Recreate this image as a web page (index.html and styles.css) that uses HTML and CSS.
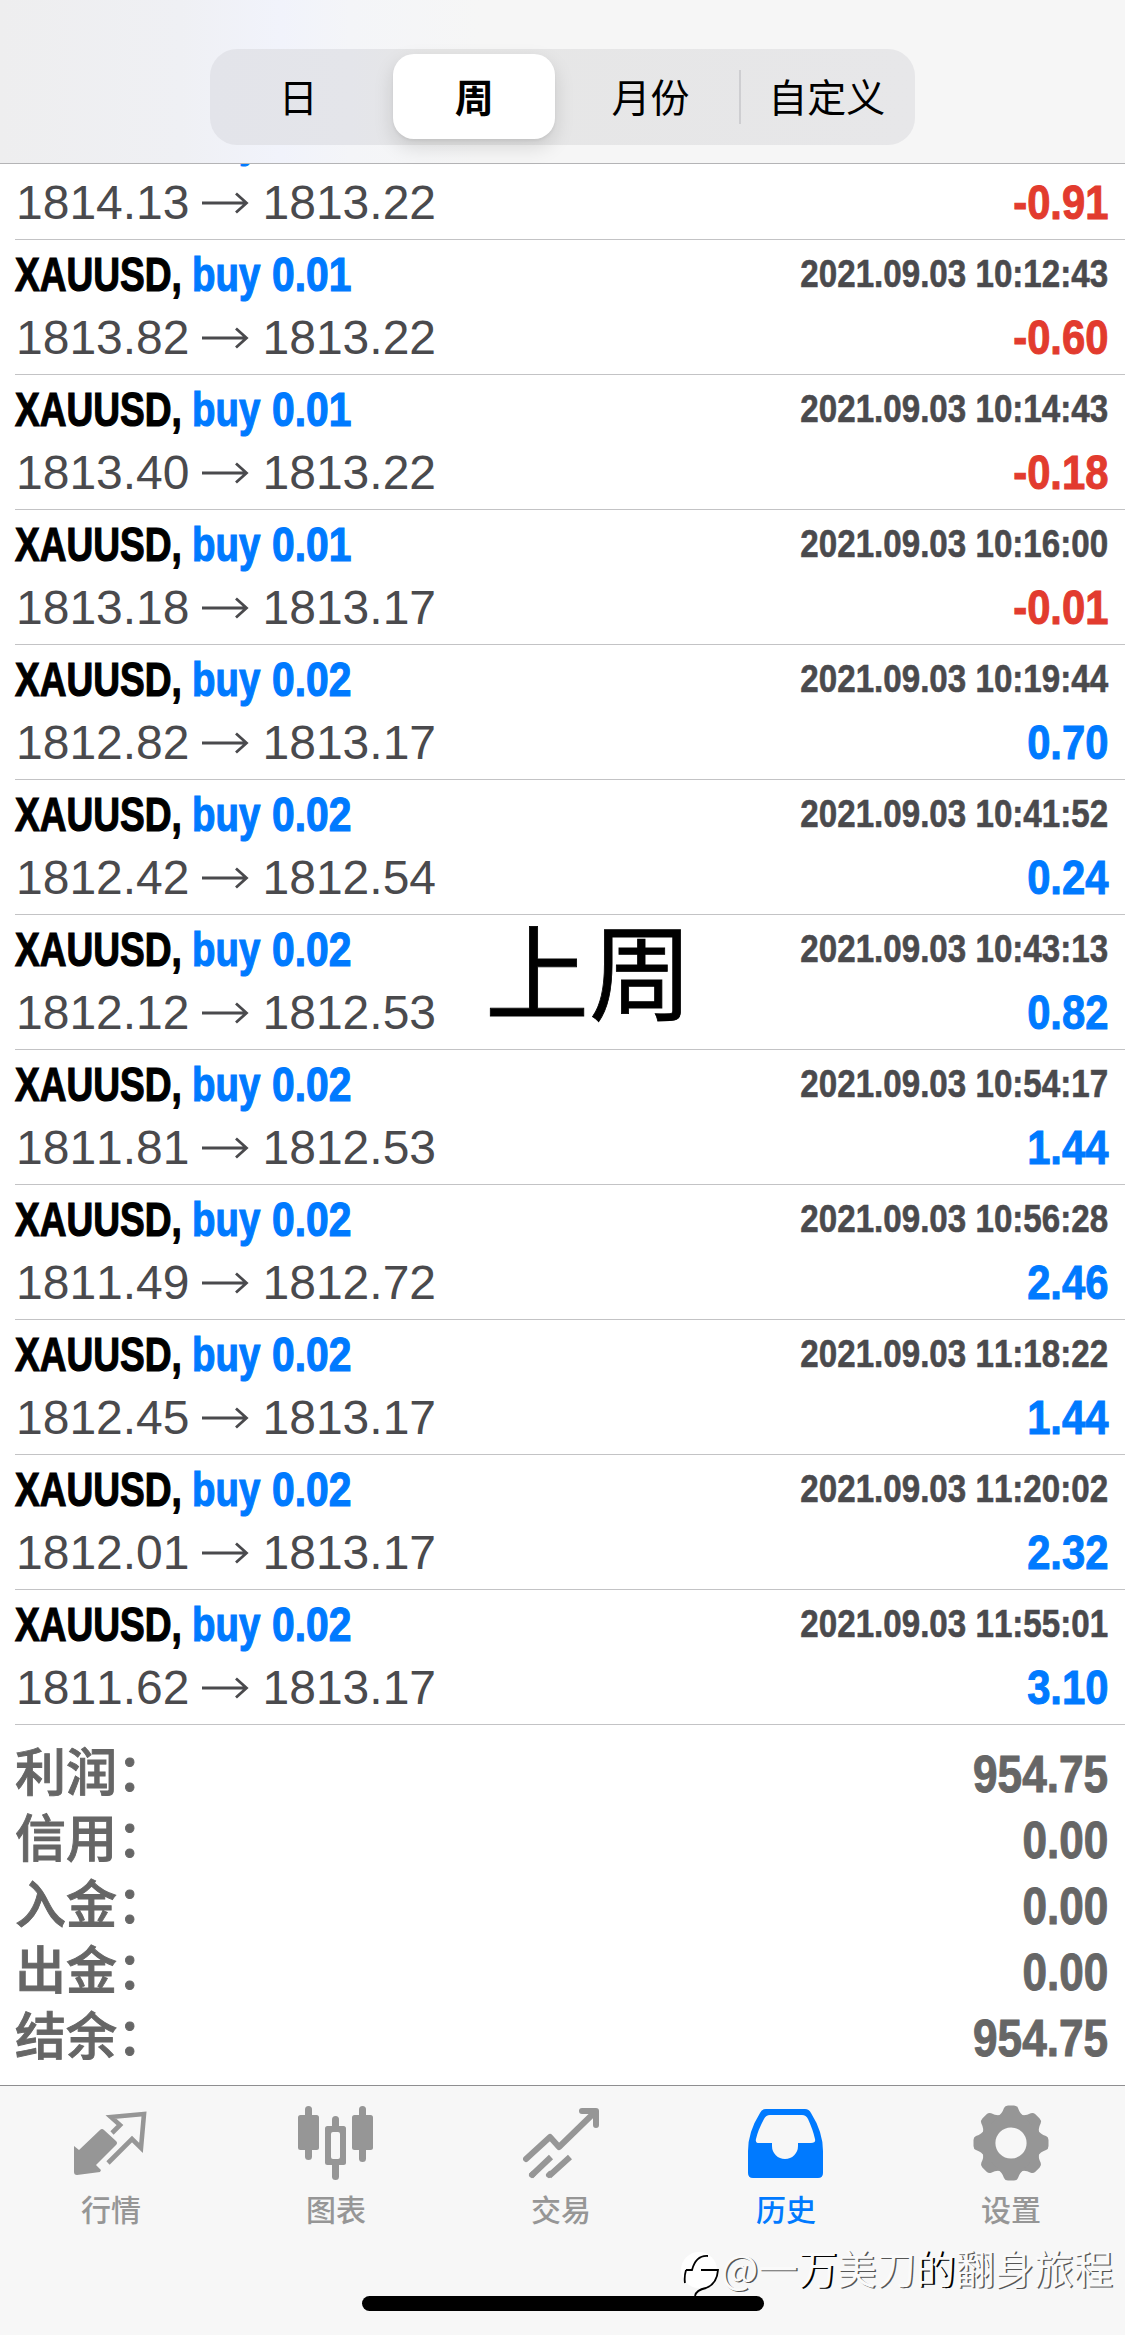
FILE: index.html
```html
<!DOCTYPE html>
<html lang="zh-CN">
<head>
<meta charset="utf-8">
<title>历史</title>
<link rel="stylesheet" href="styles.css">
</head>
<body>
<div class="app">
  <header class="header">
    <nav class="segments">
      <span class="segment">日</span>
      <span class="segment segment-active">周</span>
      <span class="segment">月份</span>
      <span class="segment segment-divided">自定义</span>
    </nav>
  </header>
  <main class="content">
    <div class="deals" id="deals"></div>
    <section class="summary">
      <div class="sum-row"><span class="sum-label">利润：</span><b class="sum-value">954.75</b></div>
      <div class="sum-row"><span class="sum-label">信用：</span><b class="sum-value">0.00</b></div>
      <div class="sum-row"><span class="sum-label">入金：</span><b class="sum-value">0.00</b></div>
      <div class="sum-row"><span class="sum-label">出金：</span><b class="sum-value">0.00</b></div>
      <div class="sum-row"><span class="sum-label">结余：</span><b class="sum-value">954.75</b></div>
    </section>
  </main>
  <footer class="footer">
    <nav class="tabs">
      <div class="tab">
        <svg class="icon" viewBox="0 0 76 76"><path d="M1 41l5 4 21-20q2-2 4 0l12 11q2 2 0 4L23 60l5 5-1 2-23 3q-3 0-3-3z" fill="#969696"/><path d="M39 28l8-8-9-8 33-3-3 34-9-9-24 24" fill="none" stroke="#969696" stroke-width="4.6"/></svg>
        <span>行情</span>
      </div>
      <div class="tab">
        <svg class="icon" viewBox="0 0 76 76" fill="#969696"><rect x="7" y="1" width="7" height="54" rx="3.5"/><rect y="10" width="21" height="35" rx="2.5"/><rect x="61" y="1" width="7" height="56" rx="3.5"/><rect x="54" y="10" width="21" height="35" rx="2.5"/><rect x="34" y="11" width="7" height="20" rx="3.5"/><rect x="34" y="50" width="7" height="25" rx="3.5"/><rect x="27" y="21" width="21" height="39" rx="2.5"/><rect x="33" y="27" width="9" height="27" rx="2" fill="#f7f7f7"/></svg>
        <span>图表</span>
      </div>
      <div class="tab">
        <svg class="icon" viewBox="0 0 76 76" fill="none" stroke="#969696" stroke-width="6" stroke-linejoin="round" stroke-linecap="round"><path d="M3 54l24-22 9 10L72 7M59 6h14v14"/><path stroke-linecap="butt" d="M8 71l20-19M26 71l21-19"/><path d="M9 70l1-1M26 70l1-1"/></svg>
        <span>交易</span>
      </div>
      <div class="tab tab-active">
        <svg class="icon" viewBox="0 0 76 76"><path fill="#007aff" fill-rule="evenodd" d="M18 4h39q4 0 6 4 12 19 12 38v22q0 5-5 5H5q-5 0-5-5V46Q0 27 12 8q2-4 6-4zM22 10q-4 0-6 4-6 11-8 20-1 4 3 4h13v3a13 13 0 0 0 26 0v-3h13q5 0 4-4-2-9-7-20-2-4-6-4z"/></svg>
        <span>历史</span>
      </div>
      <div class="tab">
        <svg class="icon" viewBox="-38 -38 76 76"><g fill="#969696"><circle r="29.5"/><g id="teeth"><path id="tooth" d="M-13-27Q-9-29-7-35-6-37.500-3-37.500H3Q6-37.500 7-35 9-29 13-27z"/><use href="#tooth" transform="rotate(45)"/><use href="#tooth" transform="rotate(90)"/><use href="#tooth" transform="rotate(135)"/></g><use href="#teeth" transform="rotate(180)"/></g><circle r="15.600" fill="#f7f7f7"/></svg>
        <span>设置</span>
      </div>
    </nav>
    <div class="home-indicator"></div>
  </footer>
  <div class="caption">上周</div>
  <div class="watermark">
    <svg class="wm-logo" viewBox="0 0 38 46"><circle cx="18" cy="20" r="18" fill="#fff"/><path d="M5 20h6Q15 5 27 6M5 20Q3 27 4 33M20 20h17Q36 34 25 38 15 40 14 46" fill="none" stroke="#000" stroke-width="1.800"/></svg>
    <span>@一<b class="wm-strong">万</b>美刀<b class="wm-strong">的</b>翻身旅程</span>
  </div>
</div>
<script src="deals.js"></script>
</body>
</html>
```
FILE: styles.css
```css
* { box-sizing: border-box; }
body { margin: 0; background: #fff; }
.app {
  position: relative;
  width: 1125px;
  height: 2335px;
  overflow: hidden;
  display: flex;
  flex-direction: column;
  font-family: "Liberation Sans", "Noto Sans CJK SC", sans-serif;
  font-kerning: none;
}
.header {
  height: 164px;
  flex: none;
  padding: 49px 210px 0;
  border-bottom: 1px solid #b4b4b6;
  background: linear-gradient(90deg, #eeeeef 0, #eff0f4 180px, #f1f3fb 280px, #f4f5f8 350px, #f6f6f6 480px);
}
.segments {
  display: flex;
  height: 96px;
  border-radius: 27px;
  background: linear-gradient(90deg, #e3e4ea, #e4e5ea 20%, #e6e6e6 32%, #e7e7e9);
}
.segment {
  position: relative;
  flex: 1;
  text-align: center;
  font-size: 39px;
  line-height: 92px;
  color: #000;
  font-family: "Noto Sans CJK SC", sans-serif;
}
.segment-active {
  flex: none;
  width: 162px;
  height: 85px;
  margin: 5px 7px 0;
  line-height: 82px;
  border-radius: 21px;
  background: #fff;
  font-weight: 700;
  box-shadow: 0 8px 20px rgba(0, 0, 0, .13), 0 2px 3px rgba(0, 0, 0, .05);
}
.segment-divided::before {
  content: "";
  position: absolute;
  left: 0;
  top: 21px;
  width: 2px;
  height: 54px;
  background: #ceced1;
}
.content { flex: 1; overflow: hidden; }
.deals { margin-top: -59px; }
.deal {
  height: 135px;
  margin-left: 15px;
  padding: 4px 17px 0 0;
  border-bottom: 1px solid #c3c3c5;
}
.line {
  display: flex;
  justify-content: space-between;
  height: 63px;
  line-height: 62px;
  font-size: 48px;
  white-space: nowrap;
}
.title { display: flex; font-weight: 700; }
.symbol, .side, .volume { transform-origin: 0 50%; -webkit-text-stroke: 1.2px; }
.symbol { width: 177px; transform: scaleX(.772); color: #000; }
.side { width: 80px; transform: scaleX(.8); color: #007aff; }
.volume { transform: scaleX(.85); color: #007aff; }
.time, .profit, .sum-value { transform-origin: 100% 50%; font-weight: 700; }
.time { font-size: 39px; line-height: 60px; color: #4a4a4d; transform: scaleX(.85); -webkit-text-stroke: .6px; }
.profit { transform: scaleX(.87); color: #007aff; -webkit-text-stroke: 1px; }
.loss { color: #e23b2e; }
.prices { display: flex; margin-left: 1px; color: #4a4a4d; }
.arrow { width: 48px; height: 24px; margin: 19px 13px 0 12px; }
.summary { padding: 17px 17px 0 15px; color: #666; }
.sum-row {
  display: flex;
  justify-content: space-between;
  height: 66px;
  line-height: 66px;
  font-size: 51px;
}
.sum-label { font-family: "Noto Sans CJK SC", sans-serif; font-weight: 500; height: 58px; line-height: 58px; margin-top: -2px; -webkit-text-stroke: .9px; }
.sum-value { transform: scaleX(.865); -webkit-text-stroke: 1px; }
.footer {
  height: 250px;
  flex: none;
  border-top: 1px solid #8e8e90;
  background: #f7f7f7;
}
.tabs { display: flex; height: 210px; padding-top: 19px; }
.tab {
  flex: 1;
  display: flex;
  flex-direction: column;
  align-items: center;
  font-family: "Noto Sans CJK SC", sans-serif;
  font-size: 30px;
  font-weight: 500;
  line-height: 44px;
  color: #969696;
  padding-right: 3px;
}
.tab-active { color: #007aff; }
.icon { width: 76px; height: 76px; margin-bottom: 5px; }
.home-indicator {
  width: 402px;
  height: 15px;
  margin: 0 auto;
  border-radius: 8px;
  background: #000;
}
.caption {
  position: absolute;
  left: 485px;
  top: 893px;
  font: 104px/150px "Noto Sans CJK SC", sans-serif;
  -webkit-text-stroke: .8px;
  color: #000;
}
.watermark {
  position: absolute;
  left: 681px;
  top: 2239px;
  display: flex;
  font: 39.4px/56px "Noto Sans CJK SC", sans-serif;
  color: #fafafa;
  white-space: nowrap;
  text-shadow: 1.5px 1px .5px #555;
}
.wm-strong { font-weight: 400; text-shadow: 2px 1px 0 #000; }
.wm-logo { width: 38px; height: 46px; margin: 11px 2px 0 0; }
```
FILE: deals.js
```js
const deals = [
  ["0.01", "10:10:43", "1814.13", "1813.22", "-0.91"],
  ["0.01", "10:12:43", "1813.82", "1813.22", "-0.60"],
  ["0.01", "10:14:43", "1813.40", "1813.22", "-0.18"],
  ["0.01", "10:16:00", "1813.18", "1813.17", "-0.01"],
  ["0.02", "10:19:44", "1812.82", "1813.17", "0.70"],
  ["0.02", "10:41:52", "1812.42", "1812.54", "0.24"],
  ["0.02", "10:43:13", "1812.12", "1812.53", "0.82"],
  ["0.02", "10:54:17", "1811.81", "1812.53", "1.44"],
  ["0.02", "10:56:28", "1811.49", "1812.72", "2.46"],
  ["0.02", "11:18:22", "1812.45", "1813.17", "1.44"],
  ["0.02", "11:20:02", "1812.01", "1813.17", "2.32"],
  ["0.02", "11:55:01", "1811.62", "1813.17", "3.10"]
];

document.getElementById("deals").innerHTML = deals.map(([volume, time, open, close, profit]) => `
  <article class="deal">
    <div class="line">
      <div class="title"><span class="symbol">XAUUSD,</span><span class="side">buy</span><span class="volume">${volume}</span></div>
      <span class="time">2021.09.03 ${time}</span>
    </div>
    <div class="line">
      <div class="prices"><span>${open}</span><svg class="arrow" viewBox="0 0 48 24"><path d="M0 12h44M34 2.500L44.500 12 34 21.500" fill="none" stroke="#4a4a4d" stroke-width="2.800"/></svg><span>${close}</span></div>
      <span class="profit${profit[0] === "-" ? " loss" : ""}">${profit}</span>
    </div>
  </article>`).join("");
```
